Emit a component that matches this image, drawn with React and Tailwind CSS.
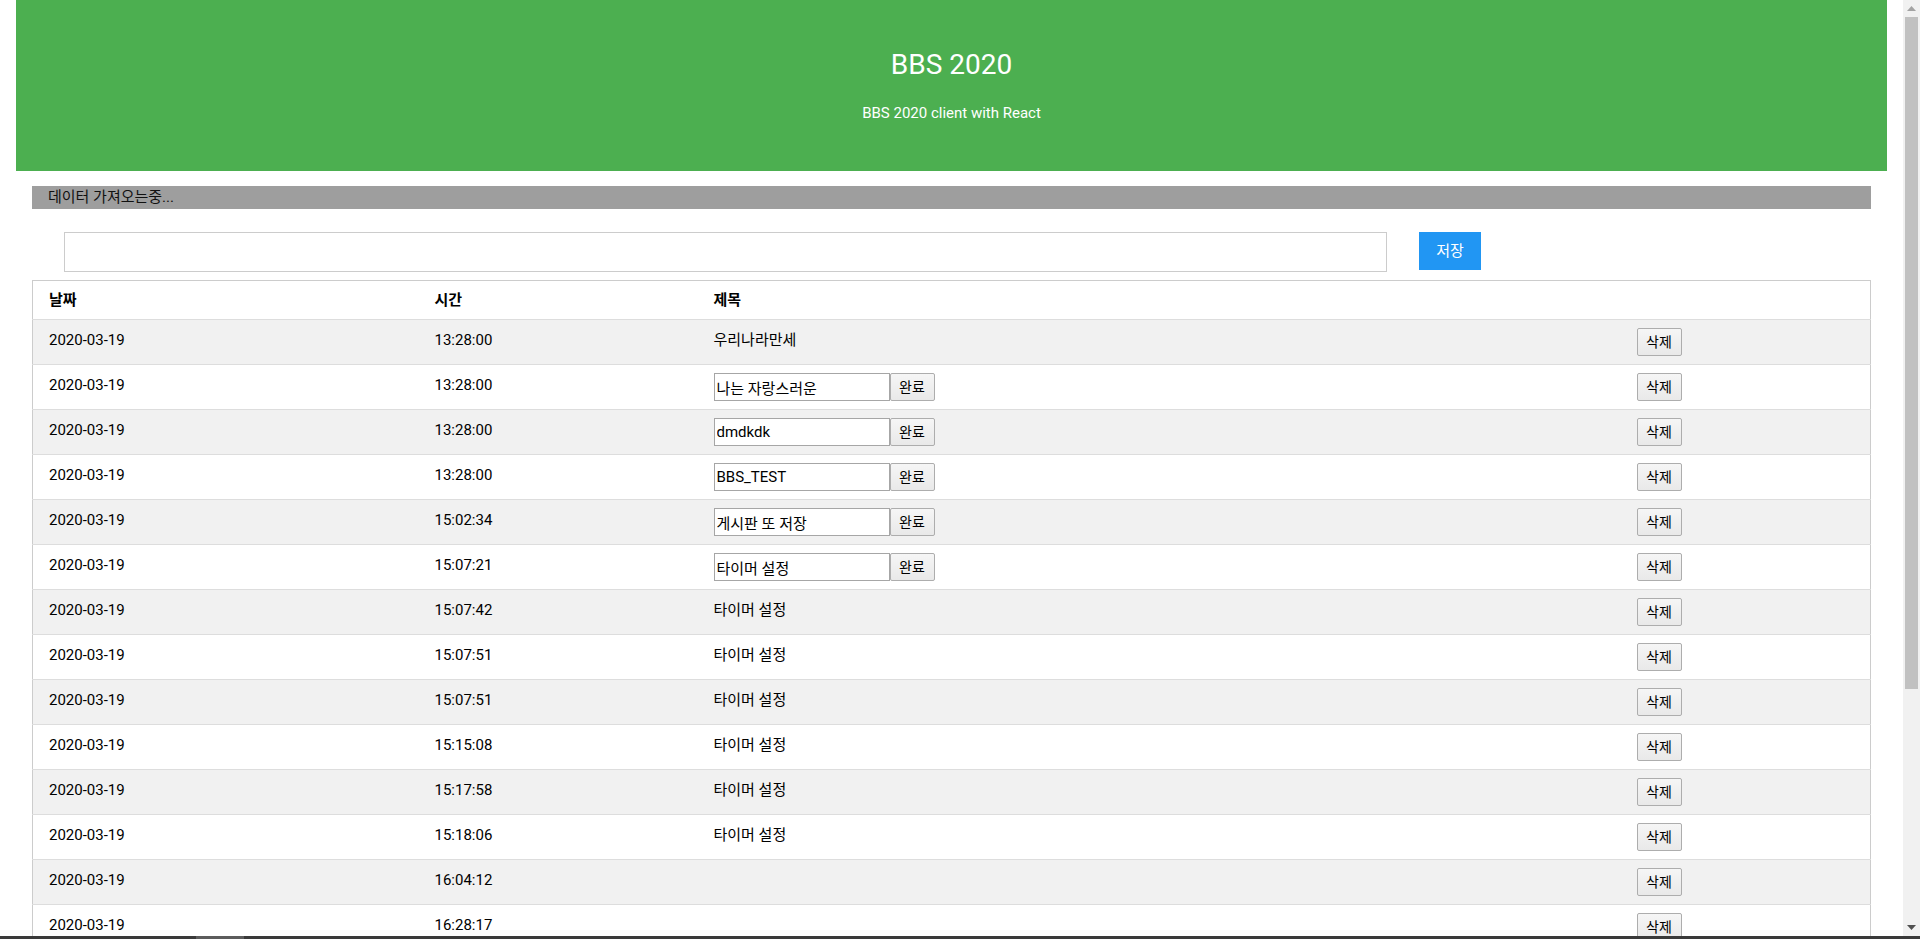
import React from "react";

const rows = [
  { time: "13:28:00", title: "우리나라만세", edit: false },
  { time: "13:28:00", title: "나는 자랑스러운", edit: true },
  { time: "13:28:00", title: "dmdkdk", edit: true },
  { time: "13:28:00", title: "BBS_TEST", edit: true },
  { time: "15:02:34", title: "게시판 또 저장", edit: true },
  { time: "15:07:21", title: "타이머 설정", edit: true },
  { time: "15:07:42", title: "타이머 설정", edit: false },
  { time: "15:07:51", title: "타이머 설정", edit: false },
  { time: "15:07:51", title: "타이머 설정", edit: false },
  { time: "15:15:08", title: "타이머 설정", edit: false },
  { time: "15:17:58", title: "타이머 설정", edit: false },
  { time: "15:18:06", title: "타이머 설정", edit: false },
  { time: "16:04:12", title: "", edit: false },
  { time: "16:28:17", title: "", edit: false },
];

function SmallButton({ children }) {
  return (
    <button className="h-[28px] w-[45px] shrink-0 rounded-[2px] border border-[#adadad] bg-gradient-to-b from-[#f6f6f6] to-[#e9e9e9] text-[14px] leading-none text-black">
      {children}
    </button>
  );
}

function Scrollbar() {
  return (
    <div className="flex h-full w-[17px] shrink-0 flex-col bg-[#f1f1f1]">
      <div className="flex h-[17px] items-center justify-center">
        <svg width="9" height="5" viewBox="0 0 9 5">
          <polygon points="0,5 9,5 4.5,0" fill="#a3a3a3" />
        </svg>
      </div>
      <div className="mx-[2px] h-[672px] bg-[#c1c1c1]" />
      <div className="flex-1" />
      <div className="flex h-[17px] items-center justify-center">
        <svg width="9" height="5" viewBox="0 0 9 5">
          <polygon points="0,0 9,0 4.5,5" fill="#505050" />
        </svg>
      </div>
    </div>
  );
}

export default function App() {
  return (
    <div className="flex h-[939px] w-[1920px] flex-col overflow-hidden bg-white font-['Roboto','Noto_Sans_CJK_KR',sans-serif] text-[15px] text-black">
      <div className="flex h-[936px] w-full">
        <main className="h-full w-[1903px] overflow-hidden">
          {/* header */}
          <header className="mx-4 flex h-[171px] flex-col items-center bg-[#4caf50] pt-[48px] text-white">
            <h1 className="text-[28px] leading-[34px] font-normal">BBS 2020</h1>
            <p className="mt-[20px] text-[15px] leading-[22px]">BBS 2020 client with React</p>
          </header>

          <div className="px-8">
            {/* status bar */}
            <div className="mt-[15px] h-[23px] bg-[#9e9e9e] pl-[16px] text-[15px] leading-[23px] text-[#111]">
              데이터 가져오는중...
            </div>

            {/* input row */}
            <div className="mt-[23px] flex items-start gap-8 pl-8">
              <input
                className="h-[40px] w-[1323px] border border-[#cccccc] bg-white px-2 outline-none"
                defaultValue=""
              />
              <button className="h-[38px] w-[62px] bg-[#2196f3] text-[15px] text-white">저장</button>
            </div>

            {/* table */}
            <table className="mt-[8px] w-full table-fixed border-collapse border border-[#cccccc]">
              <thead>
                <tr className="border-b border-[#dddddd] bg-white">
                  <th className="w-[394px] py-2 pl-4 pr-2 text-left align-top text-[15px] leading-[22px] font-bold">날짜</th>
                  <th className="w-[279px] px-2 py-2 text-left align-top text-[15px] leading-[22px] font-bold">시간</th>
                  <th className="w-[923px] px-2 py-2 text-left align-top text-[15px] leading-[22px] font-bold">제목</th>
                  <th className="px-2 py-2 pr-4 text-left align-top text-[15px] leading-[22px] font-bold"></th>
                </tr>
              </thead>
              <tbody>
                {rows.map((r, i) => (
                  <tr
                    key={i}
                    className={
                      i % 2 === 0
                        ? "h-[45px] border-b border-[#dddddd] bg-[#f1f1f1]"
                        : "h-[45px] border-b border-[#dddddd] bg-white"
                    }
                  >
                    <td className="py-2 pl-4 pr-2 align-top text-[15px] leading-[24px]">2020-03-19</td>
                    <td className="px-2 py-2 align-top text-[15px] leading-[24px]">{r.time}</td>
                    <td className="px-2 py-2 align-top text-[15px] leading-[24px]">
                      {r.edit ? (
                        <div className="flex">
                          <input
                            className="h-[28px] w-[176px] border border-[#a6a6a6] bg-white px-[2px] text-[15px] text-black outline-none"
                            defaultValue={r.title}
                          />
                          <SmallButton>완료</SmallButton>
                        </div>
                      ) : (
                        r.title
                      )}
                    </td>
                    <td className="px-2 py-2 pr-4 align-top">
                      <SmallButton>삭제</SmallButton>
                    </td>
                  </tr>
                ))}
              </tbody>
            </table>
          </div>
        </main>
        <Scrollbar />
      </div>
      <div className="flex h-[3px] w-full bg-[#3a3a3a]">
        <div className="ml-[196px] h-full w-[48px] bg-[#5c5c5c]" />
      </div>
    </div>
  );
}
